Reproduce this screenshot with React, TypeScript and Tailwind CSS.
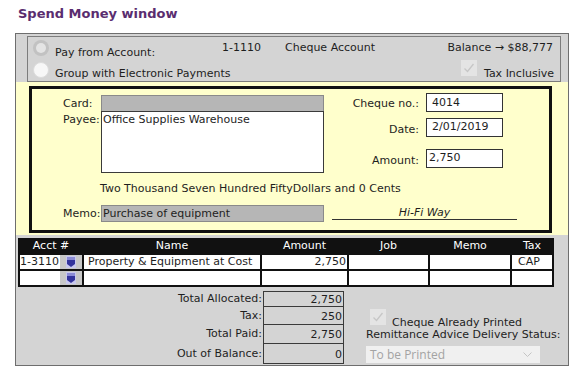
import React from "react";

const Radio = ({ on }: { on?: boolean }) =>
  on ? (
    <div className="w-[16px] h-[16px] rounded-full bg-[#c2c2c2] flex items-center justify-center">
      <div className="w-[10px] h-[10px] rounded-full bg-[#e4e4e4]" />
    </div>
  ) : (
    <div className="w-[16px] h-[16px] rounded-full bg-[#f7f7f7] border border-[#dcdcdc]" />
  );

const Check = () => (
  <svg width="16" height="16" viewBox="0 0 16 16" className="block">
    <rect x="0" y="0" width="16" height="16" fill="#e4e4e4" />
    <path d="M3.5 8.5 L6.5 11.5 L12.5 4" fill="none" stroke="#c6c6c6" strokeWidth="1.3" />
  </svg>
);

const DropIcon = () => (
  <svg width="10" height="12" viewBox="0 0 10 12" className="block">
    <rect x="0" y="0" width="10" height="12" fill="#c9c9ee" />
    <rect x="1" y="1" width="8" height="3" fill="#8c8cd6" />
    <path d="M1 4 H9 V8 L5 11 L1 8 Z" fill="#33339c" />
  </svg>
);

export default function App() {
  return (
    <div className="w-[579px] h-[379px] overflow-hidden bg-white font-['DejaVu_Sans',sans-serif] text-[11px] leading-[13px] text-[#1e1e1e]">
      <div className="h-[33px] pl-[18px] pt-[6px] text-[13px] leading-[16px] font-bold text-[#5a2d6f]">
        Spend Money window
      </div>
      <div className="ml-[15px] w-[554px] h-[333px] border border-[#6e6e6e] bg-[#d4d4d4] flex flex-col">
        {/* top panel */}
        <div className="mt-[2px] ml-[11px] w-[534px] h-[46px] border border-[#7c7c7c] flex flex-col">
          <div className="h-[22px] flex items-start">
            <div className="ml-[5px] mt-[3px]">
              <Radio on />
            </div>
            <div className="ml-[6px] mt-[9px] w-[167px]">Pay from Account:</div>
            <div className="mt-[4px] w-[63px]">1-1110</div>
            <div className="mt-[4px] flex-1">Cheque Account</div>
            <div className="mt-[4px] mr-[7px]">Balance → $88,777</div>
          </div>
          <div className="h-[22px] flex items-start">
            <div className="ml-[5px] mt-[3px]">
              <Radio />
            </div>
            <div className="ml-[6px] mt-[8px] flex-1">Group with Electronic Payments</div>
            <div className="mt-[1px]">
              <Check />
            </div>
            <div className="ml-[7px] mt-[8px] mr-[6px]">Tax Inclusive</div>
          </div>
        </div>

        {/* cheque area */}
        <div className="mt-[0px] h-[153px] bg-[#ffffcc] pt-[4px]">
          <div className="ml-[13px] w-[523px] h-[147px] border-[3px] border-[#111] flex flex-col">
            <div className="h-[84px] flex">
              <div className="w-[292px] flex flex-col">
                <div className="mt-[6px] h-[16px] flex">
                  <div className="ml-[31px] w-[38px] pt-[2px]">Card:</div>
                  <div className="w-[223px] h-[16px] bg-[#b6b6b6] border border-[#8a8a8a] border-b-0" />
                </div>
                <div className="h-[62px] flex">
                  <div className="ml-[31px] w-[38px] pt-[2px]">Payee:</div>
                  <div className="w-[223px] h-[62px] bg-white border border-[#3a3a3a] pl-[1px] pt-[1px]">
                    Office Supplies Warehouse
                  </div>
                </div>
              </div>
              <div className="flex-1 flex flex-col">
                <div className="mt-[4px] h-[19px] flex items-center">
                  <div className="w-[95px] text-right pt-[2px]">Cheque no.:</div>
                  <div className="ml-[7px] w-[77px] h-[19px] bg-white border border-[#333] pl-[5px] pt-[2px]">4014</div>
                </div>
                <div className="mt-[6px] h-[19px] flex items-center">
                  <div className="w-[95px] text-right pt-[3px]">Date:</div>
                  <div className="ml-[7px] w-[77px] h-[19px] bg-white border border-[#333] pl-[5px] pt-[1px]">2/01/2019</div>
                </div>
                <div className="mt-[12px] h-[19px] flex items-center">
                  <div className="w-[95px] text-right pt-[3px]">Amount:</div>
                  <div className="ml-[7px] w-[77px] h-[19px] bg-white border border-[#333] pl-[2px] pt-[1px]">2,750</div>
                </div>
              </div>
            </div>
            <div className="mt-[9px] h-[13px] pl-[68px]">
              Two Thousand Seven Hundred FiftyDollars and 0 Cents
            </div>
            <div className="mt-[10px] h-[17px] flex">
              <div className="ml-[31px] w-[38px] pt-[2px]">Memo:</div>
              <div className="w-[223px] h-[17px] bg-[#b6b6b6] border border-[#8a8a8a] pl-[1px] pt-[1px]">
                Purchase of equipment
              </div>
              <div className="ml-[8px] w-[185px] h-[15px] border-b border-[#333] text-center italic pt-[1px]">
                Hi-Fi Way
              </div>
            </div>
          </div>
        </div>

        {/* table */}
        <div className="mt-[3px] ml-[2px] w-[536px] bg-[#111] p-[2px] grid grid-cols-[62px_176px_85px_79px_80px_40px] gap-x-[2px] gap-y-[2px]">
          <div className="h-[13px] text-white text-center leading-[12px]">Acct #</div>
          <div className="h-[13px] text-white text-center leading-[12px]">Name</div>
          <div className="h-[13px] text-white text-center leading-[12px]">Amount</div>
          <div className="h-[13px] text-white text-center leading-[12px]">Job</div>
          <div className="h-[13px] text-white text-center leading-[12px]">Memo</div>
          <div className="h-[13px] text-white text-center leading-[12px]">Tax</div>

          <div className="h-[14px] flex">
            <div className="w-[40px] bg-white leading-[14px]">1-3110</div>
            <div className="w-[22px] bg-[#c8c8c8] flex justify-center pt-[1px]">
              <DropIcon />
            </div>
          </div>
          <div className="h-[14px] bg-white pl-[4px] leading-[14px]">Property &amp; Equipment at Cost</div>
          <div className="h-[14px] bg-white text-right pr-[1px] leading-[14px]">2,750</div>
          <div className="h-[14px] bg-white" />
          <div className="h-[14px] bg-white" />
          <div className="h-[14px] bg-white pl-[6px] leading-[14px]">CAP</div>

          <div className="h-[14px] flex">
            <div className="w-[40px] bg-white" />
            <div className="w-[22px] bg-[#c8c8c8] flex justify-center pt-[1px]">
              <DropIcon />
            </div>
          </div>
          <div className="h-[14px] bg-white" />
          <div className="h-[14px] bg-white" />
          <div className="h-[14px] bg-white" />
          <div className="h-[14px] bg-white" />
          <div className="h-[14px] bg-white" />
        </div>

        {/* bottom */}
        <div className="flex">
          <div className="mt-[4px] flex flex-col">
            <div className="h-[16px] flex">
              <div className="w-[247px] text-right pr-[1px] pt-[1px]">Total Allocated:</div>
              <div className="w-[81px] h-[16px] border border-[#3a3a3a] text-right pr-[1px] pt-[1px]">2,750</div>
            </div>
            <div className="h-[19px] -mt-[1px] flex">
              <div className="w-[247px] text-right pr-[1px] pt-[3px]">Tax:</div>
              <div className="w-[81px] h-[19px] border border-[#3a3a3a] text-right pr-[1px] pt-[3px]">250</div>
            </div>
            <div className="h-[20px] -mt-[1px] flex">
              <div className="w-[247px] text-right pr-[1px] pt-[3px]">Total Paid:</div>
              <div className="w-[81px] h-[20px] border border-[#3a3a3a] text-right pr-[1px] pt-[3px]">2,750</div>
            </div>
            <div className="h-[21px] -mt-[1px] flex">
              <div className="w-[247px] text-right pr-[1px] pt-[4px]">Out of Balance:</div>
              <div className="w-[81px] h-[21px] border border-[#3a3a3a] text-right pr-[1px] pt-[4px]">0</div>
            </div>
          </div>
          <div className="ml-[22px] flex flex-col">
            <div className="mt-[22px] h-[19px] flex items-start">
              <div className="ml-[4px]">
                <Check />
              </div>
              <div className="ml-[6px] mt-[7px]">Cheque Already Printed</div>
            </div>
            <div className="h-[13px]">Remittance Advice Delivery Status:</div>
            <div className="mt-[5px] w-[174px] h-[17px] bg-[#f0f0f0] flex items-center justify-between pl-[4px] pr-[8px] font-['Open_Sans',sans-serif] text-[12px] text-[#a3a3a3]">
              <span>To be Printed</span>
              <svg width="9" height="5" viewBox="0 0 9 5" className="block">
                <polyline points="0.5,0.5 4.5,4.5 8.5,0.5" fill="none" stroke="#c4c4c4" strokeWidth="1" />
              </svg>
            </div>
          </div>
        </div>
      </div>
    </div>
  );
}
